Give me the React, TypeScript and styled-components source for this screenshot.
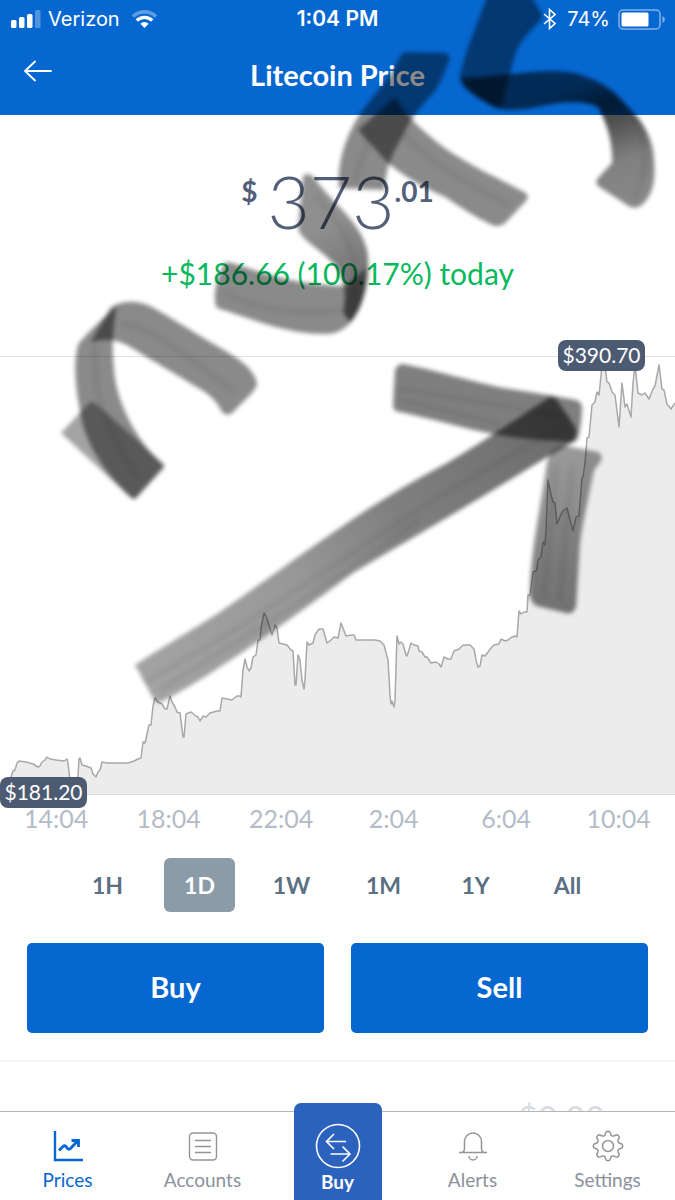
import React from 'react';
import styled, { createGlobalStyle } from 'styled-components';

const GlobalStyle = createGlobalStyle`
  * { box-sizing: border-box; }
  body { margin: 0; background: #ffffff; }
  button { font: inherit; border: 0; background: none; padding: 0; cursor: pointer; }
`;

const Shell = styled.div`
  position: relative;
  display: flex;
  flex-direction: column;
  height: 100vh;
  overflow: hidden;
  font-family: Lato, 'Open Sans', sans-serif;
  color: #53607a;
  background: #ffffff;
`;

const Header = styled.header`
  flex: none;
  background: #0667d0;
  color: #ffffff;
`;

const StatusBar = styled.div`
  display: grid;
  grid-template-columns: 1fr auto 1fr;
  align-items: center;
  height: 38px;
  padding: 0 10px;
  font-family: Inter, Roboto, sans-serif;
  font-size: 20px;
  line-height: 24px;
`;

const StatusGroup = styled.div<{ $end?: boolean }>`
  display: flex;
  align-items: center;
  justify-content: ${(p) => (p.$end ? 'flex-end' : 'flex-start')};
  gap: ${(p) => (p.$end ? 8 : 12)}px;

  > :first-child { margin-right: ${(p) => (p.$end ? 3 : -5)}px; }
`;

const Clock = styled.time`
  font-size: 21px;
  font-weight: 600;
`;

const TitleBar = styled.div`
  display: grid;
  grid-template-columns: 60px 1fr 60px;
  align-items: center;
  height: 77px;
  padding: 0 8px 4px;
`;

const BackButton = styled.button`
  display: flex;
  align-items: center;
  justify-content: center;
  height: 60px;
  padding-bottom: 8px;
  color: inherit;
`;

const Title = styled.h1`
  margin: 0;
  text-align: center;
  font-size: 29px;
  line-height: 36px;
  font-weight: 700;
`;

const Content = styled.main`
  flex: 1;
  min-height: 0;
  overflow: hidden;
`;

const PriceSummary = styled.section`
  display: flex;
  flex-direction: column;
  align-items: center;
  height: 241px;
  padding-top: 50px;
`;

const Price = styled.div`
  display: flex;
  align-items: flex-start;
  line-height: 72px;
  font-size: 73px;
  font-weight: 300;
`;

const PriceSmall = styled.span<{ $lead?: boolean }>`
  margin-right: ${(p) => (p.$lead ? 10 : 0)}px;
  padding-top: 8px;
  font-size: 28px;
  line-height: 36px;
  font-weight: 700;
`;

const Change = styled.p`
  margin: 18px 0 0;
  color: #06b95c;
  font-size: 30px;
  line-height: 36px;
`;

const ChartArea = styled.figure`
  position: relative;
  margin: 0;
  border-top: 1px solid #dfe2e9;
  border-bottom: 1px solid #d9dde5;

  svg { display: block; width: 100%; height: 437px; }
`;

const PriceTag = styled.span<{ $peak?: boolean }>`
  position: absolute;
  ${(p) => (p.$peak ? 'right: 30px; top: -17px;' : 'left: 0; bottom: -14px;')}
  width: 87px;
  height: 31px;
  border-radius: 8px;
  background: #4d5b72;
  color: #ffffff;
  text-align: center;
  font-size: 21px;
  line-height: 30px;
`;

const TimeAxis = styled.div`
  display: grid;
  grid-template-columns: repeat(6, 1fr);
  padding: 5px 0 1px;
  color: #b3bbc7;
  font-size: 25px;
  line-height: 36px;
  font-weight: 400;
  text-align: center;
`;

const RangePicker = styled.div`
  display: flex;
  justify-content: space-between;
  padding: 21px 72px 31px;
`;

const RangeButton = styled.button<{ $active?: boolean }>`
  width: 71px;
  height: 54px;
  border-radius: 6px;
  background: ${(p) => (p.$active ? '#8b9ba8' : 'transparent')};
  color: ${(p) => (p.$active ? '#ffffff' : '#5b7082')};
  font-size: 23px;
  line-height: 30px;
  font-weight: 700;
`;

const TradeRow = styled.div`
  display: grid;
  grid-template-columns: 1fr 1fr;
  gap: 27px;
  padding: 0 27px 27px;
  border-bottom: 2px solid #f5f6f7;
`;

const TradeButton = styled.button`
  height: 90px;
  padding-bottom: 2px;
  border-radius: 5px;
  background: #0667d0;
  color: #ffffff;
  font-size: 29px;
  line-height: 36px;
  font-weight: 700;
`;

const Balance = styled.p`
  margin: 0;
  padding: 36px 70px 0 0;
  text-align: right;
  color: #dcdde1;
  font-size: 34px;
  line-height: 40px;
`;

const TabBar = styled.nav`
  flex: none;
  display: grid;
  grid-template-columns: repeat(5, 1fr);
  height: 89px;
  border-top: 1px solid #b4b5ba;
  background: #ffffff;
`;

const Tab = styled.a<{ $active?: boolean }>`
  display: flex;
  flex-direction: column;
  align-items: center;
  gap: 6px;
  padding-top: 18px;
  color: ${(p) => (p.$active ? '#0667d0' : '#8a919d')};
  font-size: 19px;
  line-height: 24px;
  text-decoration: none;
`;

const BuyTab = styled(Tab)`
  justify-self: center;
  width: 88px;
  margin-top: -9px;
  padding-top: 20px;
  gap: 1px;
  border-radius: 7px 7px 0 0;
  background: #2b62be;
  color: #ffffff;
  font-weight: 700;
`;

const Ink = styled.svg`
  position: absolute;
  top: 0;
  left: 0;
  width: 100%;
  pointer-events: none;
`;

const series: [number, number][] = [
  [0, 790], [8, 788], [11, 777], [13, 771], [15, 770], [17, 763], [19, 761], [26, 762], [33, 764], [38, 767], [40, 766],
  [42, 762], [45, 760], [47, 757], [50, 759], [56, 760], [64, 761], [67, 759], [68, 763], [70, 780], [74, 792],
  [78, 776], [79, 759], [80, 758], [82, 765], [86, 766], [91, 768], [93, 774], [96, 777], [98, 772], [100, 770],
  [102, 762], [107, 763], [118, 763], [128, 763], [134, 761], [138, 759], [141, 758], [143, 742], [145, 743],
  [147, 734], [149, 725], [151, 725], [153, 706], [155, 698], [158, 702], [162, 704], [165, 709], [167, 709],
  [170, 696], [172, 702], [175, 707], [177, 712], [180, 713], [183, 737], [184, 737], [186, 714], [191, 712],
  [196, 716], [198, 717], [200, 721], [203, 716], [206, 717], [210, 713], [217, 711], [220, 711], [222, 698],
  [227, 699], [232, 700], [237, 696], [240, 696], [241, 697], [243, 670], [245, 659], [247, 667], [249, 671],
  [251, 668], [253, 657], [256, 655], [258, 640], [260, 640], [261, 628], [264, 613], [266, 616], [269, 625],
  [272, 635], [275, 625], [277, 628], [279, 643], [287, 645], [291, 650], [293, 651], [295, 685], [296, 685],
  [298, 655], [300, 660], [302, 680], [304, 689], [305, 680], [307, 642], [309, 645], [313, 643], [315, 635],
  [319, 629], [323, 629], [327, 643], [331, 640], [334, 637], [338, 638], [341, 623], [343, 628], [346, 636],
  [352, 635], [354, 635], [356, 640], [375, 640], [380, 641], [384, 645], [388, 660], [390, 695], [391, 704],
  [392, 701], [394, 707], [395, 700], [397, 636], [399, 644], [401, 642], [403, 644], [406, 655], [407, 656],
  [409, 650], [411, 643], [414, 645], [418, 646], [419, 651], [422, 652], [425, 657], [427, 657], [431, 663],
  [436, 662], [439, 664], [441, 667], [444, 657], [448, 659], [451, 659], [454, 651], [459, 649], [463, 645],
  [470, 645], [473, 648], [474, 649], [476, 660], [478, 667], [480, 666], [482, 655], [485, 656], [488, 652],
  [491, 648], [494, 645], [499, 644], [501, 639], [505, 641], [508, 640], [512, 637], [515, 636], [517, 637],
  [519, 611], [521, 614], [524, 612], [527, 612], [528, 595], [530, 595], [533, 572], [537, 570], [538, 560],
  [541, 557], [543, 542], [545, 545], [546, 530], [548, 480], [551, 495], [553, 502], [555, 503], [557, 524],
  [562, 512], [564, 510], [567, 508], [570, 520], [573, 531], [576, 517], [579, 516], [582, 478], [583, 477],
  [585, 463], [587, 438], [589, 437], [592, 405], [595, 402], [597, 392], [599, 395], [602, 366], [605, 366],
  [607, 382], [609, 383], [612, 392], [615, 395], [619, 427], [622, 383], [625, 407], [627, 404], [631, 417],
  [633, 383], [635, 365], [638, 393], [642, 395], [645, 393], [649, 399], [653, 389], [655, 386], [659, 365],
  [662, 389], [664, 390], [667, 404], [671, 409], [675, 403],
];

const linePath = 'M' + series.map(([x, y]) => `${x} ${y}`).join('L');

const PriceChart = () => (
  <svg viewBox="0 357 675 437" preserveAspectRatio="none" role="img" aria-label="Litecoin price over one day">
    <path d={`${linePath}V794H0Z`} fill="#ececec" />
    <path d={linePath} fill="none" stroke="#a8a8a8" strokeWidth="1.500" strokeLinejoin="round" vectorEffect="non-scaling-stroke" />
  </svg>
);

const SignalIcon = () => (
  <svg width="31" height="18" viewBox="0 0 31 18" fill="#fff">
    <rect x="1" y="10" width="5.500" height="8" rx="1.500" />
    <rect x="9" y="7" width="5.500" height="11" rx="1.500" />
    <rect x="17" y="4" width="5.500" height="14" rx="1.500" />
    <rect x="25" y="0" width="5.500" height="18" rx="1.500" opacity=".3" />
  </svg>
);

const WifiIcon = () => (
  <svg width="25" height="18" viewBox="0 0 25 18" fill="none" stroke="#fff">
    <path d="M1 6.500a16.500 16.500 0 0 1 23 0" strokeWidth="3.600" opacity=".35" />
    <path d="M4.800 10.500a11 11 0 0 1 15.400 0" strokeWidth="3.400" />
    <path d="M12.500 18 8.300 13.800a6 6 0 0 1 8.400 0Z" fill="#fff" stroke="none" />
  </svg>
);

const BluetoothIcon = () => (
  <svg width="13" height="22" viewBox="0 0 13 22" fill="none" stroke="#fff" strokeWidth="1.600">
    <path d="M1 6 12 15.500 6.500 20.500V1.500L12 6.500 1 16" />
  </svg>
);

const BatteryIcon = () => (
  <svg width="47" height="21" viewBox="0 0 47 21">
    <rect x="1" y="1" width="41" height="19" rx="4" fill="none" stroke="#fff" strokeWidth="1.500" opacity=".5" />
    <rect x="3.500" y="3.500" width="27" height="14" rx="1.500" fill="#fff" />
    <path d="M44.500 7v7c3-1.500 3-5.500 0-7Z" fill="#fff" opacity=".5" />
  </svg>
);

const BackIcon = () => (
  <svg width="28" height="22" viewBox="0 0 28 22" fill="none" stroke="#fff" strokeWidth="1.800" strokeLinecap="round" strokeLinejoin="round">
    <path d="M27 11H1M11 1.500 1 11l10 9.500" />
  </svg>
);

const PricesIcon = () => (
  <svg width="30" height="32" viewBox="0 0 30 32" fill="none" stroke="#0667d0" strokeWidth="2.400">
    <path d="M2 1v29h28" />
    <path d="m6 20.500 4-4q1.500-1.500 3 0l1.500 2q1.500 1.500 3 0L25 10.500M18.500 10.500H25.500V17" strokeWidth="2.800" />
  </svg>
);

const AccountsIcon = () => (
  <svg width="30" height="32" viewBox="0 0 30 32" fill="none" stroke="#94959a" strokeWidth="1.400">
    <rect x="1.500" y="3" width="27" height="27" rx="3.500" />
    <path d="M7.500 10.500h15M7.500 16.500h15M7.500 22.500h15" strokeLinecap="round" />
  </svg>
);

const ExchangeIcon = () => (
  <svg width="46" height="46" viewBox="0 0 46 46" fill="none" stroke="#fff" strokeWidth="1.600">
    <circle cx="23" cy="23" r="21.500" />
    <path d="M31 18.500H11.500M19 11l-7.500 7.500L19 26" />
    <path d="M15.500 31H35M27.500 23.500 35 31l-7.500 7.500" />
  </svg>
);

const AlertsIcon = () => (
  <svg width="30" height="32" viewBox="0 0 30 32" fill="none" stroke="#94959a" strokeWidth="1.500">
    <path d="M1 22.500h28M4 22.500c2-.5 2.500-2.500 2.500-4.500v-6.500a8.500 8.500 0 0 1 17 0V18c0 2 .5 4 2.500 4.500" />
    <path d="M11 26a4 4 0 0 0 8 0" />
  </svg>
);

const gearPath = (() => {
  const pts: string[] = [];
  for (let i = 0; i <= 96; i++) {
    const a = (i / 96) * Math.PI * 2;
    const wave = Math.cos(a * 8);
    const r = 12.8 + 1.9 * Math.sign(wave) * Math.sqrt(Math.abs(wave));
    pts.push(`${(16 + r * Math.sin(a)).toFixed(2)} ${(16 - r * Math.cos(a)).toFixed(2)}`);
  }
  return `M${pts.join('L')}Z`;
})();

const SettingsIcon = () => (
  <svg width="32" height="32" viewBox="0 0 32 32" fill="none" stroke="#94959a" strokeWidth="1.500" strokeLinejoin="round">
    <path d={gearPath} />
    <circle cx="16" cy="16" r="5.500" />
  </svg>
);

const MarkerStrokes = () => (
  <Ink viewBox="0 0 675 1200" aria-hidden="true">
    <defs>
      <filter id="soft" x="-10%" y="-10%" width="120%" height="120%">
        <feGaussianBlur stdDeviation="2.200" />
      </filter>
      <linearGradient id="shaft" gradientUnits="userSpaceOnUse" x1="150" y1="690" x2="570" y2="410">
        <stop offset="0" stopOpacity=".36" />
        <stop offset=".35" stopOpacity=".4" />
        <stop offset=".6" stopOpacity=".5" />
        <stop offset="1" stopOpacity=".58" />
      </linearGradient>
      <linearGradient id="drop" gradientUnits="userSpaceOnUse" x1="0" y1="450" x2="0" y2="610">
        <stop offset="0" stopOpacity=".4" />
        <stop offset="1" stopOpacity=".52" />
      </linearGradient>
      <linearGradient id="hook" gradientUnits="userSpaceOnUse" x1="590" y1="80" x2="634" y2="205">
        <stop offset="0" stopOpacity=".58" />
        <stop offset=".2" stopOpacity=".74" />
        <stop offset=".4" stopOpacity=".66" />
        <stop offset=".65" stopOpacity=".5" />
        <stop offset="1" stopOpacity=".46" />
      </linearGradient>
      <linearGradient id="fold" gradientUnits="userSpaceOnUse" x1="325" y1="225" x2="362" y2="290">
        <stop offset="0" stopOpacity=".44" />
        <stop offset="1" stopOpacity=".56" />
      </linearGradient>
    </defs>
    <g filter="url(#soft)" fill="#000" fillOpacity=".46">
      <path d="M61 433 90 402Q93 401 96 404L164 464Q165 468 162 470L137 497Q133 500 129 496Z" fillOpacity=".36" />
      <path d="M133 499C105 475 83 440 80 410C74 380 74 355 79 343C90 330 103 318 117 306C112 330 112 350 114 370C116 400 135 440 164 466L137 497Q135 500 133 499Z" />
      <path d="M91 342 111 307C125 299 140 301 152 307C172 318 190 330 210 342C235 356 255 368 257 384Q256 389 250 395L232 413Q227 417 222 412C217 402 212 396 200 389L140 353C125 343 112 336 93 342Z" />
      <path d="M303 176Q310 170 318 183C335 205 360 222 367 250C372 280 362 310 350 322L343 312C347 295 345 280 336 266C320 248 300 240 298 228Z" fill="url(#fold)" fillOpacity="1" />
      <path d="M226 262C245 264 275 284 346 286L366 268C367 300 355 334 325 334C285 334 250 318 217 308C212 300 216 275 226 262Z" />
      <path d="M405 52 444 53Q453 55 448 63C445 72 440 82 436 90C425 102 412 115 402 137C392 155 386 165 385 190L339 188C337 165 344 140 358 117C372 96 390 80 401 55Z" />
      <path d="M395 97C404 112 420 131 452 153C465 161 478 169 495 177L524 192Q531 196 525 202L506 222Q500 228 492 225C475 217 460 207 445 197C428 189 408 180 388 163L358 130Z" />
      <path d="M488 -6H530L542 14Q543 19 537 24C527 34 520 42 515 55C510 72 506 90 502 107H495C484 102 474 96 465 88Q459 82 460 76C466 48 476 28 488 -6Z" />
      <path d="M461 78C495 78 540 67 575 73C605 82 615 92 628 107C642 120 650 135 653 150C656 175 655 190 645 202Q638 210 630 207L598 186Q594 181 600 176L612 163C613 145 608 125 598 107C585 100 560 101 532 108C518 110 507 111 496 108C482 100 465 92 461 78Z" fill="url(#hook)" fillOpacity="1" />
      <path d="M135 665C164 646 192 630 220 612C262 583 308 549 353 519C384 498 415 480 447 463C484 441 518 418 550 397Q554 396 557 400L575 427Q579 436 571 443C540 461 510 480 480 498C437 524 395 548 353 573C308 606 265 638 220 667C200 680 182 691 163 701Q157 705 153 698Z" fill="url(#shaft)" fillOpacity="1" />
      <path d="M403 364C435 370 470 381 503 388C530 392 555 396 576 400Q583 402 582 410Q581 428 578 438Q576 443 570 442C545 440 518 439 493 434C462 428 430 418 400 412Q393 412 393 405L395 370Q398 363 403 364Z" fillOpacity=".5" />
      <path d="M550 454Q557 445 567 446L598 452Q604 455 600 463Q594 468 593 475C588 500 583 520 580 543L576 607Q573 615 566 613L537 606Q529 602 530 590C531 550 540 510 547 463Z" fill="url(#drop)" fillOpacity="1" />
    </g>
    <g filter="url(#soft)" fill="none" stroke="#000" strokeOpacity=".05" strokeWidth="7">
      <path d="M145 682C200 652 240 628 290 594C350 556 400 520 450 490L560 428M160 690 300 602 420 520" />
      <path d="M399 388 480 402 570 418M400 400 500 424" />
      <path d="M556 465 544 598M572 465 560 602" />
      <path d="M120 325C140 320 180 350 235 392M95 345C92 390 105 430 140 480" />
      <path d="M222 292C260 310 300 316 340 310M315 195C345 230 360 250 354 300" />
      <path d="M400 130C430 165 470 185 510 205M372 130 354 182" />
      <path d="M640 130C648 155 645 180 634 200" />
    </g>
  </Ink>
);

const times = ['14:04', '18:04', '22:04', '2:04', '6:04', '10:04'];
const ranges = ['1H', '1D', '1W', '1M', '1Y', 'All'];

export default function App() {
  const [range, setRange] = React.useState('1D');
  return (
    <Shell>
      <GlobalStyle />
      <Header>
        <StatusBar>
          <StatusGroup>
            <SignalIcon />
            <span>Verizon</span>
            <WifiIcon />
          </StatusGroup>
          <Clock>1:04 PM</Clock>
          <StatusGroup $end>
            <BluetoothIcon />
            <span>74%</span>
            <BatteryIcon />
          </StatusGroup>
        </StatusBar>
        <TitleBar>
          <BackButton aria-label="Back"><BackIcon /></BackButton>
          <Title>Litecoin Price</Title>
        </TitleBar>
      </Header>
      <Content>
        <PriceSummary>
          <Price>
            <PriceSmall $lead>$</PriceSmall>
            373
            <PriceSmall>.01</PriceSmall>
          </Price>
          <Change>+$186.66 (100.17%) today</Change>
        </PriceSummary>
        <ChartArea>
          <PriceChart />
          <PriceTag $peak>$390.70</PriceTag>
          <PriceTag>$181.20</PriceTag>
        </ChartArea>
        <TimeAxis>
          {times.map((t) => <span key={t}>{t}</span>)}
        </TimeAxis>
        <RangePicker>
          {ranges.map((r) => (
            <RangeButton key={r} $active={r === range} aria-pressed={r === range} onClick={() => setRange(r)}>{r}</RangeButton>
          ))}
        </RangePicker>
        <TradeRow>
          <TradeButton>Buy</TradeButton>
          <TradeButton>Sell</TradeButton>
        </TradeRow>
        <Balance>$0.00</Balance>
      </Content>
      <TabBar>
        <Tab href="#prices" $active><PricesIcon />Prices</Tab>
        <Tab href="#accounts"><AccountsIcon />Accounts</Tab>
        <BuyTab href="#buy"><ExchangeIcon />Buy</BuyTab>
        <Tab href="#alerts"><AlertsIcon />Alerts</Tab>
        <Tab href="#settings"><SettingsIcon />Settings</Tab>
      </TabBar>
      <MarkerStrokes />
    </Shell>
  );
}
